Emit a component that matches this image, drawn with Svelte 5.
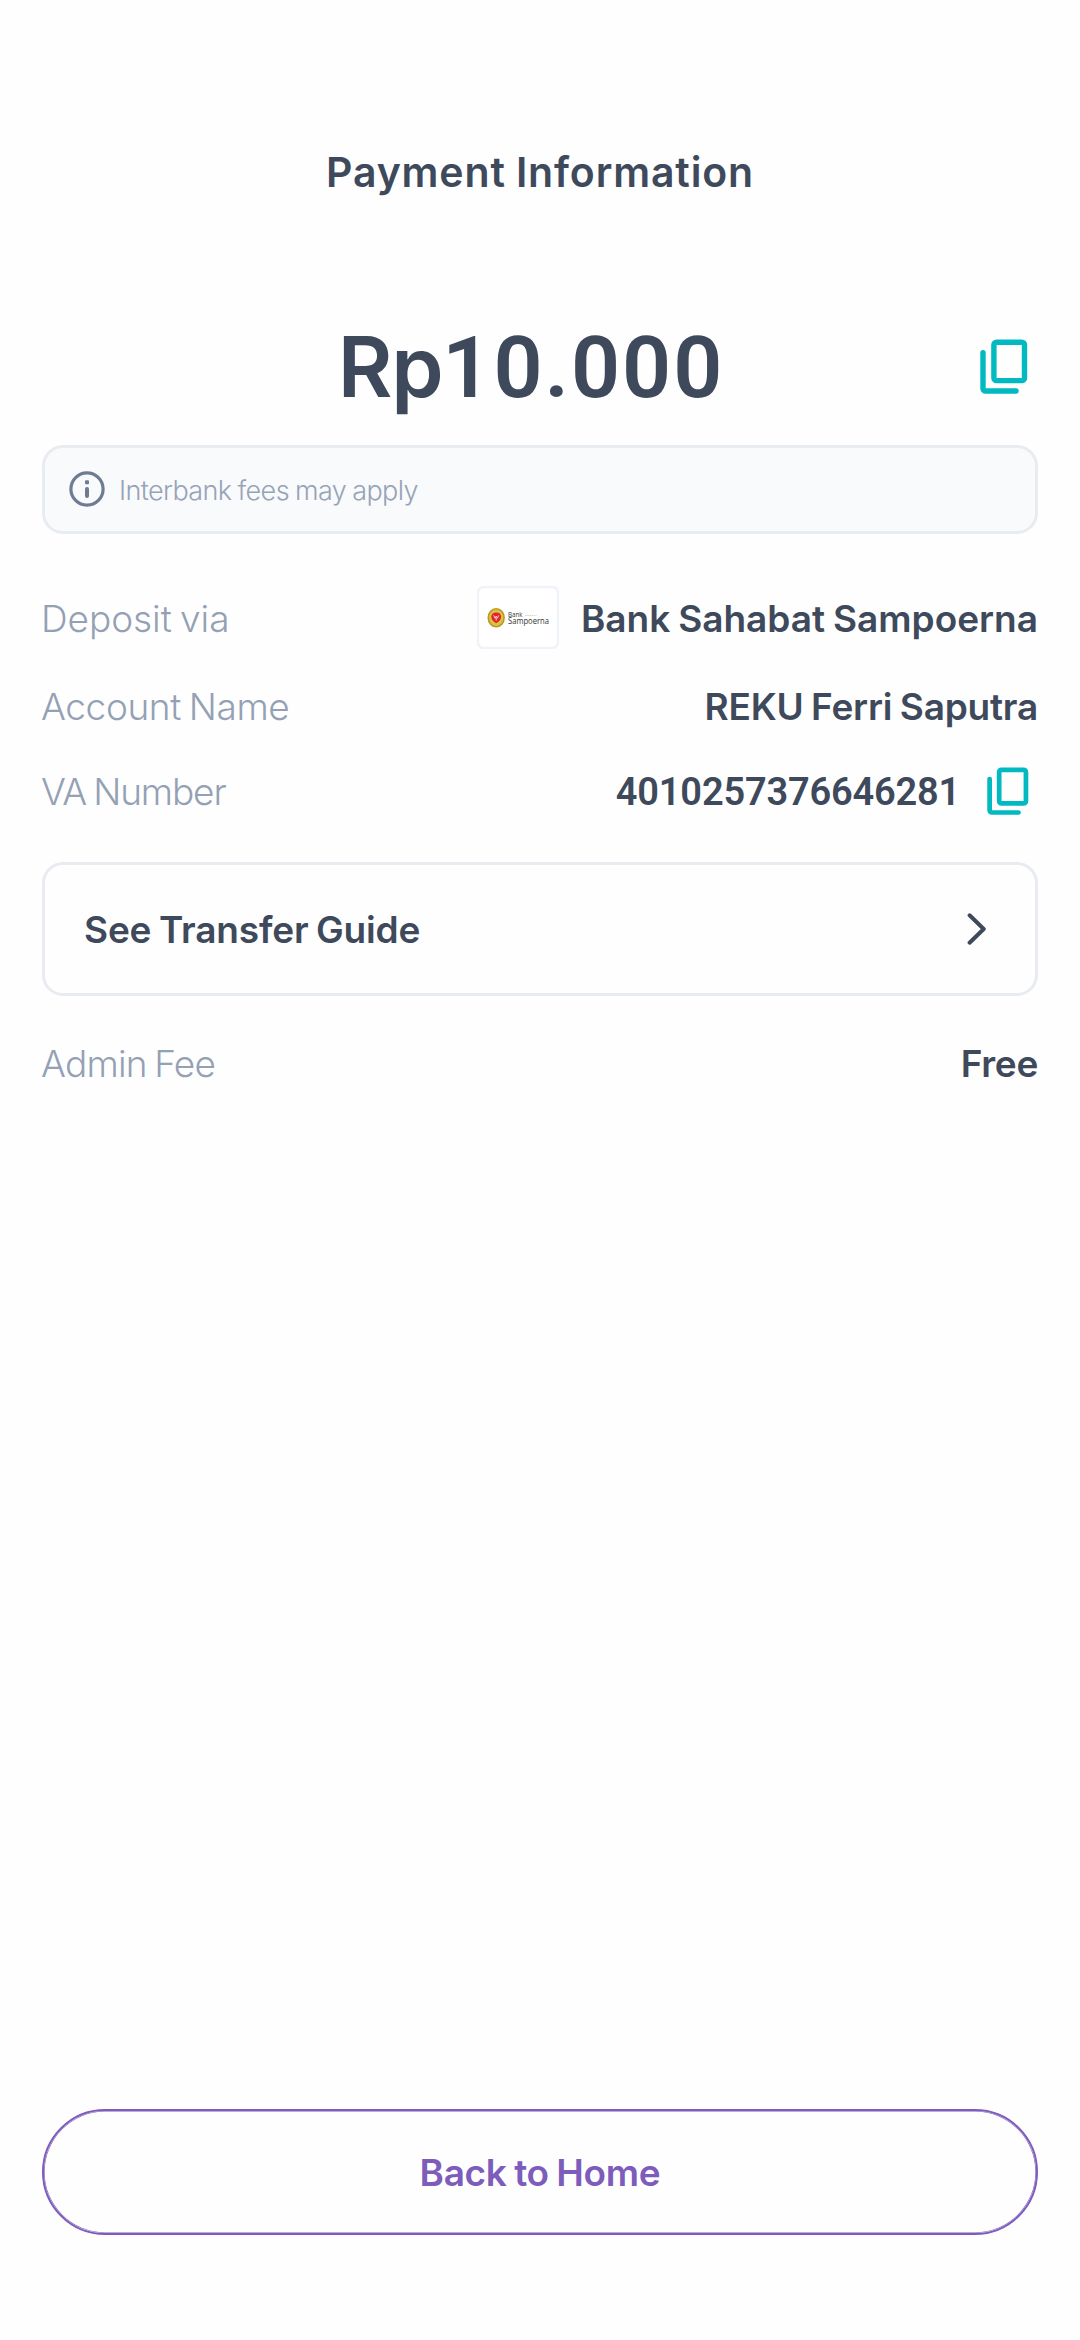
<script>
  const amount = { currency: 'Rp', value: '10.000' };
  const accountName = 'REKU Ferri Saputra';
  const vaNumber = '4010257376646281';
</script>

{#snippet copyIcon(cls)}
  <svg class={cls} viewBox="0 0 48 56" fill="none" stroke="currentColor" stroke-width="5.4" stroke-linecap="round" stroke-linejoin="round" aria-hidden="true">
    <rect x="13.9" y="3.2" width="30.6" height="38.4" rx="2.6" />
    <path d="M3 13.8V49.4a2.6 2.6 0 0 0 2.6 2.6H36" />
  </svg>
{/snippet}

<main class="screen">
  <header class="header"><h1>Payment Information</h1></header>

  <section class="amount">
    <p class="total"><span>{amount.currency}</span><span class="figure">{amount.value}</span></p>
    <button class="icon-button" aria-label="Copy amount">{@render copyIcon('copy large')}</button>
  </section>

  <aside class="notice">
    <svg class="info" viewBox="0 0 36 36" aria-hidden="true">
      <circle cx="18" cy="18" r="16.1" fill="none" stroke="currentColor" stroke-width="3.2" />
      <rect x="16" y="9.2" width="4" height="4" rx="1" fill="currentColor" />
      <rect x="16" y="16" width="4" height="11" rx="1.9" fill="currentColor" />
    </svg>
    <span>Interbank fees may apply</span>
  </aside>

  <div class="row deposit">
    <span class="label via">Deposit via</span>
    <div class="bank">
      <svg class="logo" viewBox="0 0 82 63" aria-label="Bank Sampoerna">
        <rect x="1" y="1" width="80" height="61" rx="5.5" fill="#fff" stroke="#eff3f8" stroke-width="2.4" />
        <ellipse cx="19.2" cy="31.8" rx="8.7" ry="9.8" fill="#b8992b" />
        <ellipse cx="19.2" cy="31.8" rx="7.1" ry="8.2" fill="#dcc53a" />
        <path d="M19.2 37.3C15.8 35.6 14.3 33.2 14.3 30.6c0-2.3 1.7-4.1 4.9-4.1s4.9 1.8 4.9 4.1c0 2.6-1.5 5-4.9 6.7Z" fill="#e3232e" />
        <path d="m16.6 29.4 1.5 2.8 1.1-2.1 1.1 2.1 1.5-2.8M19.2 32v2.6" fill="none" stroke="#fff" stroke-width=".8" />
        <text x="31" y="31" font-size="7" textLength="14.5" lengthAdjust="spacingAndGlyphs">Bank</text>
        <text x="31" y="38.2" font-size="8.2" textLength="41" lengthAdjust="spacingAndGlyphs">Sampoerna</text>
        <path d="M48 29.5h11.5" stroke="#d5d5d5" stroke-width="1.2" stroke-dasharray="1.6 .6" />
      </svg>
      <span class="value bank-name">Bank Sahabat Sampoerna</span>
    </div>
  </div>

  <div class="row name">
    <span class="label account">Account Name</span>
    <span class="value holder">{accountName}</span>
  </div>

  <div class="row va">
    <span class="label va-label">VA Number</span>
    <div class="number">
      <span class="value digits">{vaNumber}</span>
      <button class="icon-button" aria-label="Copy VA number">{@render copyIcon('copy small')}</button>
    </div>
  </div>

  <button class="guide">
    <span>See Transfer Guide</span>
    <svg class="chevron" viewBox="0 0 20 34" fill="none" stroke="currentColor" stroke-width="4" stroke-linecap="round" stroke-linejoin="round" aria-hidden="true">
      <path d="M2.6 3.3 16.7 17 2.6 30.7" />
    </svg>
  </button>

  <div class="row fee">
    <span class="label fee-label">Admin Fee</span>
    <span class="value free">Free</span>
  </div>

  <button class="home">Back to Home</button>
</main>

<style>
  :global(body) { background: #fefefe; }
  .screen {
    box-sizing: border-box;
    display: flex;
    flex-direction: column;
    width: 1080px;
    height: 2340px;
    padding: 132px 42px 105px;
    background: #fefefe;
    color: #3e4a5c;
    font-family: Inter, Roboto, sans-serif;
    font-size: 37px;
    font-weight: 600;
    white-space: nowrap;
  }
  button {
    box-sizing: border-box;
    margin: 0;
    padding: 0;
    border: 0;
    background: none;
    color: inherit;
    font: inherit;
    cursor: pointer;
  }
  .header { display: grid; height: 80px; place-items: center; }
  h1 { margin: 0; font-size: 41px; font-weight: 600; line-height: 80px; letter-spacing: .85px; word-spacing: -1px; }

  .amount {
    display: grid;
    grid-template-columns: 1fr 48px;
    align-items: center;
    height: 111px;
    margin-top: 99px;
    padding-right: 10px;
  }
  .total { margin: 0; padding-left: 40px; text-align: center; font-size: 84px; line-height: 111px; letter-spacing: -1.3px; }
  .figure { font-family: Roboto, Inter, sans-serif; font-size: 86px; letter-spacing: 2px; }

  .icon-button { display: block; color: #00b9c1; }
  .copy { display: block; }
  .large { width: 48px; height: 56px; }
  .small { width: 42px; height: 49px; }

  .notice {
    box-sizing: border-box;
    display: flex;
    align-items: center;
    gap: 14px;
    height: 89px;
    margin-top: 22.5px;
    padding: 0 24px;
    border: 3px solid #e8ebf0;
    border-radius: 21px;
    background: #f8fafc;
    color: #97a3b6;
    font-size: 27px;
    font-weight: 300;
    letter-spacing: -.6px;
    word-spacing: -1px;
  }
  .notice span { padding-top: 3px; }
  .info { width: 36px; height: 36px; flex: none; color: #6d7c93; }

  .row { display: flex; align-items: center; justify-content: space-between; height: 51px; }
  .deposit { height: 63px; margin-top: 52.5px; }
  .name { margin-top: 32px; }
  .va { margin-top: 34px; }
  .fee { margin-top: 42px; }
  .label { margin-left: -1px; color: #94a1b5; font-weight: 300; word-spacing: -2px; }
  .via { letter-spacing: -.05px; }
  .account { letter-spacing: -.4px; }
  .va-label { letter-spacing: -1.15px; }
  .fee-label { letter-spacing: -.8px; }
  .deposit .label, .bank-name { padding-top: 2px; }

  .bank { display: flex; align-items: center; gap: 22px; }
  .logo { width: 82px; height: 63px; font-family: "Open Sans", sans-serif; font-weight: 500; fill: #343434; }
  .bank-name { word-spacing: -1.5px; }
  .holder { letter-spacing: -.22px; word-spacing: -1.5px; }
  .number { display: flex; align-items: center; gap: 27px; padding-right: 9px; }
  .digits { font-family: Roboto, Inter, sans-serif; font-size: 38px; letter-spacing: -.2px; }
  .free { letter-spacing: -.3px; }

  .guide {
    display: flex;
    align-items: center;
    justify-content: space-between;
    height: 134px;
    margin-top: 45px;
    padding: 0 48px 0 39px;
    border: 3px solid #e8ebf0;
    border-radius: 21px;
    letter-spacing: -.18px;
    word-spacing: -1.5px;
  }
  .chevron { width: 20px; height: 34px; }

  .home {
    height: 126px;
    margin-top: auto;
    border: 2px solid #7d5cbc;
    border-radius: 63px;
    box-shadow: inset 0 0 0 .6px #7d5cbc;
    color: #7d5cbc;
    letter-spacing: -.3px;
    word-spacing: -1.5px;
  }
</style>
